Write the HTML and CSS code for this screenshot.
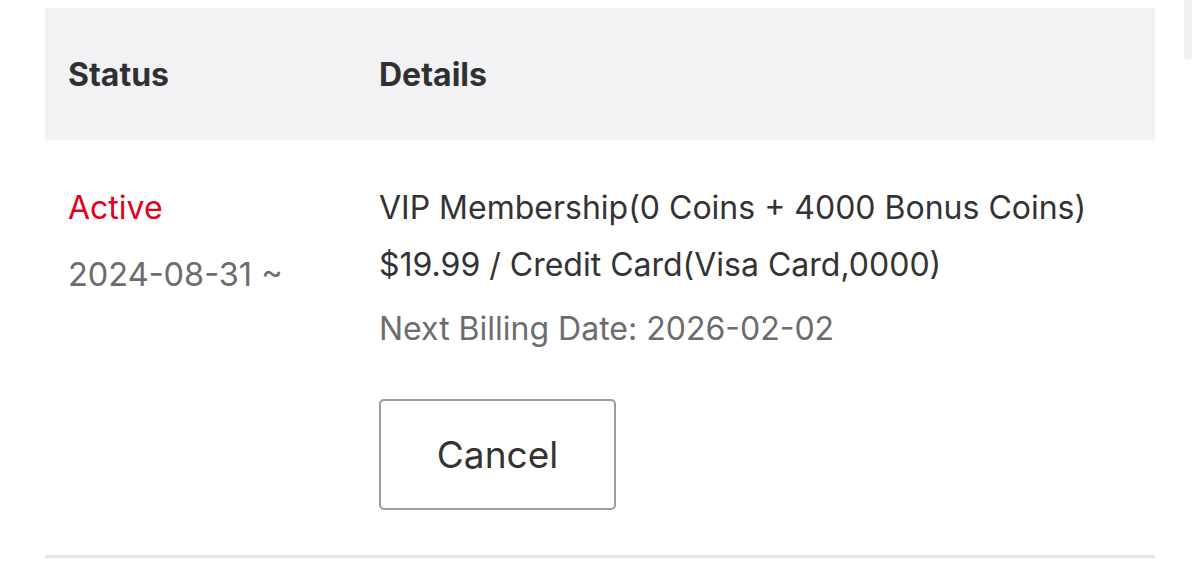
FILE: index.html
```html
<!DOCTYPE html>
<html>
<head>
<meta charset="utf-8">
<link rel="stylesheet" href="styles.css">
</head>
<body>
<div class="scroll-thumb"></div>
<div class="table">
  <div class="row head">
    <div class="col status">Status</div>
    <div class="col details">Details</div>
  </div>
  <div class="row body">
    <div class="col status">
      <div class="active">Active</div>
      <div class="since">2024-08-31 ~</div>
    </div>
    <div class="col details">
      <div class="line">VIP Membership(0 Coins + 4000 Bonus Coins)</div>
      <div class="line">$19.99 / Credit Card(Visa Card,0000)</div>
      <div class="next">Next Billing Date: 2026-02-02</div>
      <button class="cancel">Cancel</button>
    </div>
  </div>
</div>
</body>
</html>
```
FILE: styles.css
```css
html, body {
  margin: 0;
  padding: 0;
  background: #ffffff;
  font-family: Inter, "Noto Sans", sans-serif;
  color: #333336;
}
body {
  position: relative;
  width: 1200px;
  height: 566px;
  overflow: hidden;
}
.scroll-thumb {
  position: absolute;
  right: 8px;
  top: 0;
  width: 8px;
  height: 60px;
  background: #f1f1f3;
  border-radius: 0 0 4px 4px;
}
.table {
  margin: 8px 45px 0 45px;
  border-bottom: 3px solid #e6e6ea;
}
.row {
  display: flex;
}
.col.status {
  width: 311px;
  padding-left: 23px;
}
.col.details {
  flex: 1;
}
.head {
  background: #f2f2f4;
  height: 132px;
  align-items: center;
  font-weight: 700;
  font-size: 32px;
  color: #303033;
}
.body {
  padding-top: 48px;
  padding-bottom: 45px;
  font-size: 32px;
}
.active {
  color: #e4001b;
  line-height: 40px;
}
.since {
  color: #6c6c70;
  margin-top: 27px;
  line-height: 40px;
  font-size: 32.5px;
}
.line {
  color: #333336;
  line-height: 40px;
}
.body .details .line:nth-child(2) {
  margin-top: 17px;
}
.next {
  color: #6c6c70;
  margin-top: 24px;
  line-height: 40px;
}
.cancel {
  display: block;
  margin-top: 50px;
  width: 237px;
  height: 111px;
  border: 2px solid #9c9ca0;
  border-radius: 5px;
  background: #ffffff;
  font-family: Inter, "Noto Sans", sans-serif;
  font-size: 37px;
  color: #333336;
  padding: 0;
}
```
